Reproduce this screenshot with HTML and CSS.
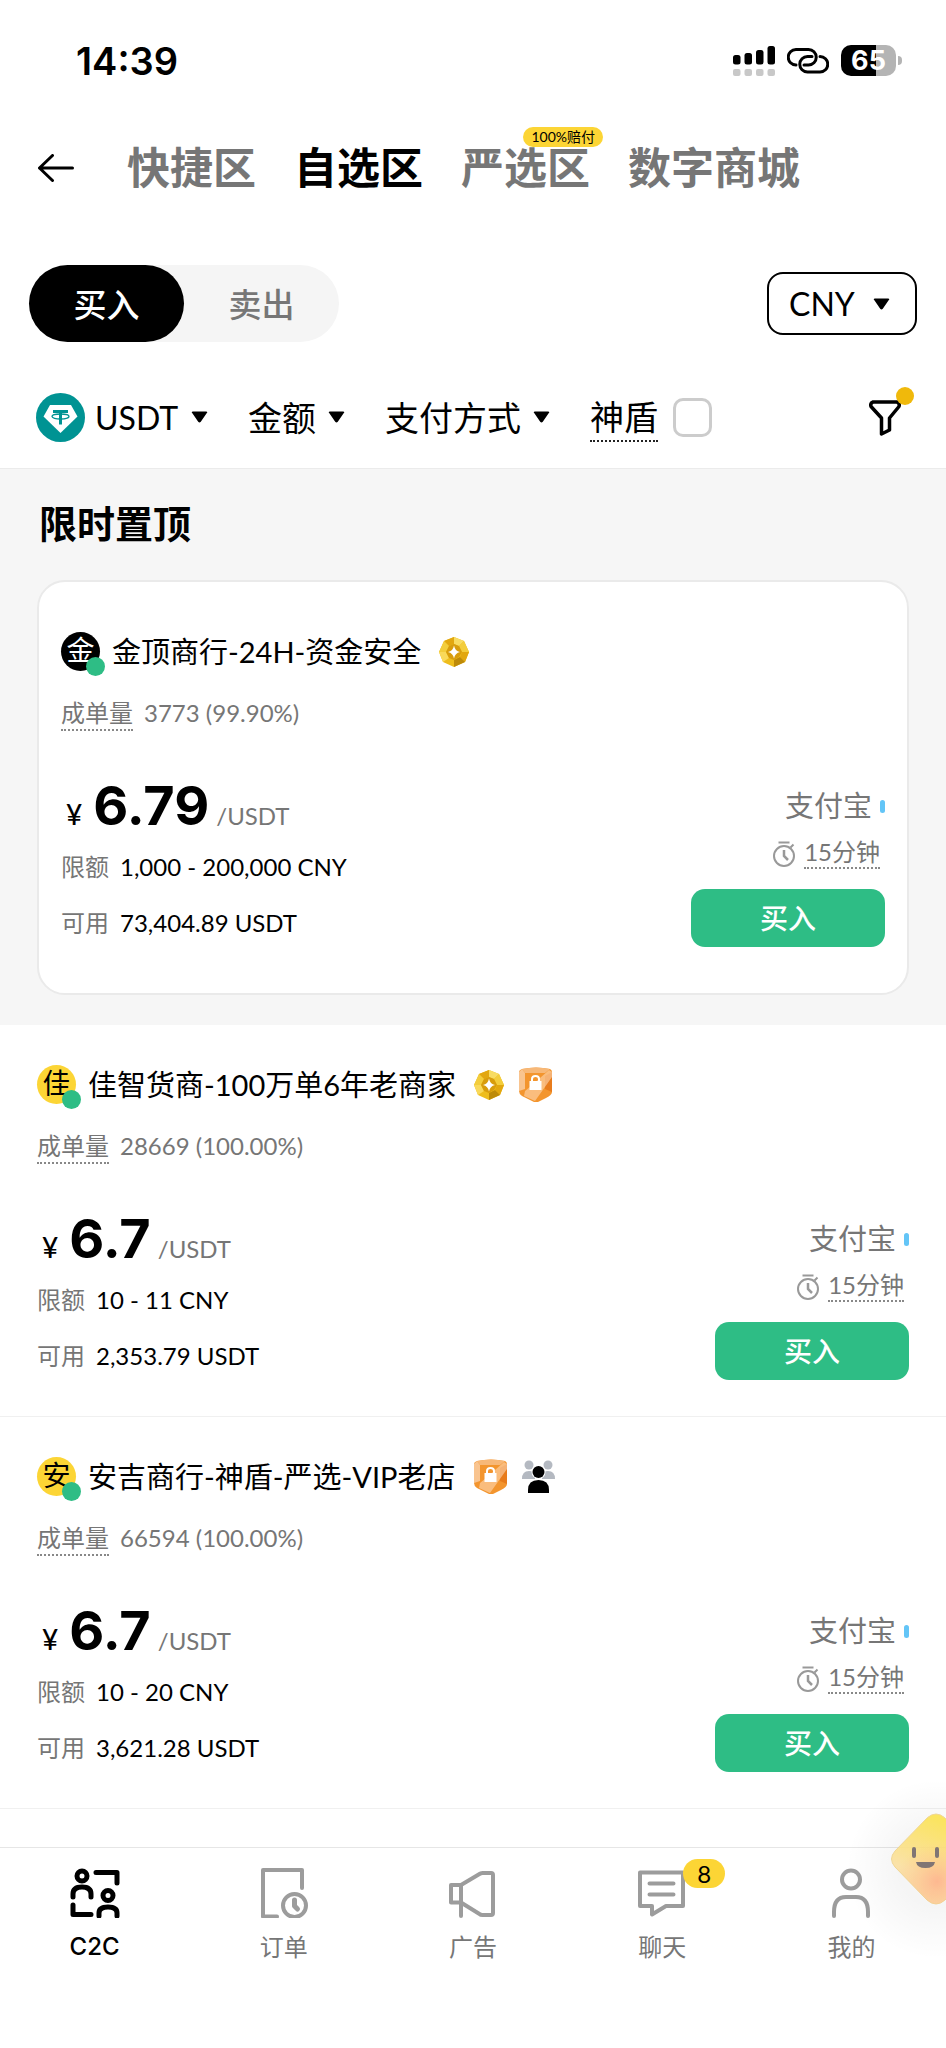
FILE: index.html
```html
<!DOCTYPE html>
<html lang="zh-CN">
<head>
	<meta charset="utf-8">
	<meta name="viewport" content="width=device-width, initial-scale=1">
	<title>C2C</title>
	<link rel="stylesheet" href="styles.css">
</head>
<body>
	<!-- shared icons -->
	<svg class="sprite" aria-hidden="true">
		<symbol id="caret" viewBox="0 0 17 12"><path d="M2 .5h13q2 0 .8 1.600L9.800 10.800q-1.300 1.400-2.600 0L1.200 2.100Q0 .5 2 .5z"/></symbol>
		<symbol id="timer" viewBox="0 0 22 26">
			<g fill="none" stroke="#999" stroke-width="2">
				<circle cx="11" cy="15" r="10"/>
				<path d="M5.500 1.500h11M17.500 6.500l3-3"/>
				<path d="M11 9v6l4 4" stroke-width="2.500"/>
			</g>
		</symbol>
		<symbol id="gold" viewBox="0 0 30 30">
			<path fill="#eebd1c" d="M15 0l10 4 5 11-4 10-11 5-11-5-4-10L5 4z"/>
			<path fill="#f8dc62" d="M15 0l10 4-5 5-5-2z"/>
			<path fill="#e2a70f" d="M15 0L5 4l5 5 5-2zM30 15l-4 10-5-5 2-5z"/>
			<path fill="#f3cd3c" d="M5 4L0 15l7 0 3-6zM25 4l5 11h-7l-3-6z"/>
			<path fill="#f9d95a" d="M4 25l-4-10h7l3 6z"/>
			<path fill="#bd8a09" d="M15 30l11-5-5-5-6 3z"/>
			<path fill="#d89d0c" d="M10 9l5-2 5 2 3 6-3 5-5 3-5-2-3-6z"/>
			<path fill="#fff" d="M15 8.500q1 5.500 6 6.500-5 1-6 6.500-1-5.500-6-6.500 5-1 6-6.500z"/>
		</symbol>
		<symbol id="shield" viewBox="0 0 33 35">
			<path fill="#f3952e" d="M3 2q14-3 28 0 2 1 2 3v20q0 3-6 6l-8 4q-3 1-6-1L3 29q-3-2-3-5V5q0-2 3-3z"/>
			<path fill="#f7b878" d="M3 2q14-3 28 0L26 6H6z"/>
			<path fill="#f9c48f" d="M3 2L0 5v19l6-2V6z"/>
			<path fill="#e87c1c" d="M33 5v20l-7-3V9z"/>
			<path fill="#ffdfc0" d="M6 24l6-5L30 3l3 2v5L16 34 5 29z" opacity=".55"/>
			<path fill="#fff" d="M10.500 14h12v9h-12z"/>
			<path fill="none" stroke="#fff" stroke-width="2" d="M13 14v-2q0-3 3.500-3t3.500 3v2"/>
		</symbol>
		<symbol id="people" viewBox="0 0 33 34">
			<g fill="#b4b9c1">
				<circle cx="7" cy="5" r="4.500"/>
				<circle cx="26" cy="5" r="4.500"/>
				<path d="M0 19q0-8 7-8 5 0 6 4v4zM33 19q0-8-7-8-5 0-6 4v4z"/>
			</g>
			<circle cx="16.500" cy="12" r="7" fill="#fff"/>
			<circle cx="16.500" cy="12" r="6"/>
			<path d="M6 33v-3q0-10 10.500-10T27 30v3z"/>
		</symbol>
	</svg>

	<div class="status">
		<time>14:39</time>
		<div class="status-icons">
			<svg width="42" height="30" viewBox="0 0 42 30">
				<rect y="9" width="7.500" height="9.500" rx="2.500"/>
				<rect x="11.500" y="7" width="7.500" height="11.500" rx="2.500"/>
				<rect x="23" y="4" width="7.500" height="14.500" rx="2.500"/>
				<rect x="34.500" width="7.500" height="18.500" rx="2.500"/>
				<g fill="#c8c8c8">
					<rect y="23" width="7.500" height="7" rx="2"/>
					<rect x="11.500" y="23" width="7.500" height="7" rx="2"/>
					<rect x="23" y="23" width="7.500" height="7" rx="2"/>
					<rect x="34.500" y="23" width="7.500" height="7" rx="2"/>
				</g>
			</svg>
			<svg width="42" height="26" viewBox="0 0 42 26" fill="none" stroke="#000" stroke-width="3" stroke-linecap="round">
				<path d="M9 17A7.750 7.750 0 0 1 9 1.500h12.500a7.750 7.750 0 0 1 0 15.500H17"/>
				<path d="M33 8.500a7.750 7.750 0 0 1 0 15.500H20.500a7.750 7.750 0 0 1 0-15.500H25"/>
			</svg>
			<span class="battery">65</span>
		</div>
	</div>

	<header class="topbar">
		<a href="#back" class="back" aria-label="返回">
			<svg width="36" height="28" viewBox="0 0 36 28" fill="none" stroke="#000" stroke-width="3" stroke-linecap="round" stroke-linejoin="round"><path d="M34.500 14H1.500M14.500 1.500L1.500 14l13 12.500"/></svg>
		</a>
		<nav class="zones">
			<a href="#express">快捷区</a>
			<a href="#p2p" class="active">自选区</a>
			<a href="#strict">严选区<span class="tip">100%赔付</span></a>
			<a href="#mall">数字商城</a>
		</nav>
	</header>

	<div class="trade">
		<div class="toggle">
			<button type="button" class="on">买入</button>
			<button type="button">卖出</button>
		</div>
		<div class="dropdown fiat">
			<select aria-label="法币"><option>CNY</option></select>
			<svg class="caret"><use href="#caret"/></svg>
		</div>
	</div>

	<div class="filters">
		<svg class="coin" viewBox="0 0 49 49">
			<circle cx="24.500" cy="24.500" r="24.500" fill="#009393"/>
			<path fill="#fff" d="M14 12h21l6.500 11.500L24.500 40 7.500 23.500z"/>
			<g fill="none" stroke="#009393">
				<path stroke-width="3" d="M17 18.500h15M24.500 18.500v13"/>
				<ellipse cx="24.500" cy="23.500" rx="8.500" ry="2.500" stroke-width="1.300"/>
			</g>
		</svg>
		<div class="dropdown">
			<select aria-label="币种"><option>USDT</option></select>
			<svg class="caret"><use href="#caret"/></svg>
		</div>
		<div class="dropdown">
			<select aria-label="金额"><option>金额</option></select>
			<svg class="caret"><use href="#caret"/></svg>
		</div>
		<div class="dropdown">
			<select aria-label="支付方式"><option>支付方式</option></select>
			<svg class="caret"><use href="#caret"/></svg>
		</div>
		<label for="guard" class="guard">神盾</label>
		<input type="checkbox" id="guard">
		<button type="button" class="funnel" aria-label="筛选">
			<svg width="32" height="36" viewBox="0 0 32 36" fill="none" stroke="#000" stroke-width="3.500" stroke-linejoin="round"><path d="M4 2h24q3 1 2 4.500L20.500 18v12l-8 4V18L2 6.500Q1 3 4 2z"/></svg>
		</button>
	</div>

	<main>
		<section class="pinned">
			<h2>限时置顶</h2>
			<article class="offer card">
				<div class="merchant">
					<span class="avatar dark">金</span>
					<a href="#m1">金顶商行-24H-资金安全</a>
					<svg class="gold"><use href="#gold"/></svg>
				</div>
				<p class="stats"><span class="hint">成单量</span>3773 (99.90%)</p>
				<div class="deal">
					<div class="info">
						<p class="price"><small>¥</small><b>6.79</b><span>/USDT</span></p>
						<p class="line"><span>限额</span>1,000 - 200,000 CNY</p>
						<p class="line"><span>可用</span>73,404.89 USDT</p>
					</div>
					<div class="side">
						<p class="pay">支付宝</p>
						<p class="time"><svg><use href="#timer"/></svg><span class="hint">15分钟</span></p>
						<button type="button" class="buy">买入</button>
					</div>
				</div>
			</article>
		</section>

		<article class="offer">
			<div class="merchant">
				<span class="avatar">佳</span>
				<a href="#m2">佳智货商-100万单6年老商家</a>
				<svg class="gold"><use href="#gold"/></svg>
				<svg class="shield"><use href="#shield"/></svg>
			</div>
			<p class="stats"><span class="hint">成单量</span>28669 (100.00%)</p>
			<div class="deal">
				<div class="info">
					<p class="price"><small>¥</small><b>6.7</b><span>/USDT</span></p>
					<p class="line"><span>限额</span>10 - 11 CNY</p>
					<p class="line"><span>可用</span>2,353.79 USDT</p>
				</div>
				<div class="side">
					<p class="pay">支付宝</p>
					<p class="time"><svg><use href="#timer"/></svg><span class="hint">15分钟</span></p>
					<button type="button" class="buy">买入</button>
				</div>
			</div>
		</article>

		<article class="offer">
			<div class="merchant">
				<span class="avatar">安</span>
				<a href="#m3">安吉商行-神盾-严选-VIP老店</a>
				<svg class="shield"><use href="#shield"/></svg>
				<svg class="people"><use href="#people"/></svg>
			</div>
			<p class="stats"><span class="hint">成单量</span>66594 (100.00%)</p>
			<div class="deal">
				<div class="info">
					<p class="price"><small>¥</small><b>6.7</b><span>/USDT</span></p>
					<p class="line"><span>限额</span>10 - 20 CNY</p>
					<p class="line"><span>可用</span>3,621.28 USDT</p>
				</div>
				<div class="side">
					<p class="pay">支付宝</p>
					<p class="time"><svg><use href="#timer"/></svg><span class="hint">15分钟</span></p>
					<button type="button" class="buy">买入</button>
				</div>
			</div>
		</article>
	</main>

	<nav class="tabbar">
		<a href="#c2c" class="active">
			<svg viewBox="0 0 50 50">
				<circle cx="12" cy="8" r="5"/>
				<path d="M3 29v-3q0-7 9-7t9 7v3M26 4.500h21V15M3 37v9.500h18"/>
				<circle cx="38" cy="27.500" r="5"/>
				<path d="M29 48v-3q0-6 9-6t9 6v3"/>
			</svg>
			C2C
		</a>
		<a href="#orders">
			<svg viewBox="0 0 50 50">
				<path d="M43 20V2H4v46.500h14"/>
				<circle cx="35.500" cy="37.500" r="11.500"/>
				<path d="M35.500 32v6l3 3" stroke-width="5"/>
			</svg>
			订单
		</a>
		<a href="#ads">
			<svg viewBox="0 0 50 50">
				<path d="M3 17h10v17.500H3zM13 17L31.500 6q1-1 3-1H43q2 0 2 2v38q0 2-2 2h-8.500q-2 0-3-1L13 34.500V48"/>
			</svg>
			广告
		</a>
		<a href="#chat">
			<svg viewBox="0 0 50 50">
				<path d="M3 4.500h43V38H29l-14 8.500V38H3zM12.500 15.500h24M12.500 26.500h24"/>
			</svg>
			聊天
			<span class="count">8</span>
		</a>
		<a href="#me">
			<svg viewBox="0 0 50 50">
				<circle cx="25" cy="11.500" r="9"/>
				<path d="M8 48v-4q0-15 12-15h10q12 0 12 15v4"/>
			</svg>
			我的
		</a>
		<!-- assistant, half off the right edge -->
		<svg class="helper" viewBox="0 0 160 200">
			<defs>
				<radialGradient id="haze"><stop offset=".4" stop-color="#000" stop-opacity=".04"/><stop offset="1" stop-color="#000" stop-opacity="0"/></radialGradient>
				<linearGradient id="face" x1="0" y1="1" x2=".4" y2="0"><stop offset="0" stop-color="#fcd3a0"/><stop offset=".4" stop-color="#fbe0a0"/><stop offset="1" stop-color="#fce34f"/></linearGradient>
				<radialGradient id="glow" cx=".5" cy=".75" r=".45"><stop offset="0" stop-color="#ffa680" stop-opacity=".8"/><stop offset="1" stop-color="#ffc080" stop-opacity="0"/></radialGradient>
			</defs>
			<circle cx="150" cy="110" r="90" fill="url(#haze)"/>
			<g opacity=".9">
				<path fill="url(#face)" stroke="#f0d48c" d="M141 59q9-8 18 0l34 34q7 7 0 14l-34 34q-9 8-18 0l-32-33q-7-8 0-16z"/>
				<path fill="url(#glow)" d="M141 59q9-8 18 0l34 34q7 7 0 14l-34 34q-9 8-18 0l-32-33q-7-8 0-16z"/>
			</g>
			<g fill="#807574">
				<rect x="126" y="88" width="4" height="11" rx="2"/>
				<rect x="149" y="88" width="4" height="11" rx="2"/>
				<path d="M130 103h19q-1 6-9.500 6t-9.500-6z"/>
			</g>
		</svg>
	</nav>
</body>
</html>
```

FILE: styles.css
```css
* { box-sizing: border-box; }

body {
	margin: 0;
	min-height: 100vh;
	display: flex;
	flex-direction: column;
	background: #fff;
	color: #000;
	font: 24px/30px Lato, "Noto Sans CJK SC", sans-serif;
}

p, h2 { margin: 0; }
a { color: inherit; text-decoration: none; }
button, select, input { font: inherit; color: inherit; margin: 0; }
button { border: 0; padding: 0; background: none; }
svg { display: block; flex: none; }
.sprite { width: 0; height: 0; position: absolute; }

/* status bar */
.status {
	height: 121px;
	padding: 0 44px 0 76px;
	display: flex;
	align-items: center;
	justify-content: space-between;
	font-family: Inter, sans-serif;
}
.status time { font-size: 38px; font-weight: 600; }
.status-icons { display: flex; align-items: center; gap: 12px; }
.battery {
	position: relative;
	width: 55px;
	height: 31px;
	margin-right: 6px;
	border-radius: 10px;
	background: linear-gradient(90deg, #000 64%, #b4b4b4 64%);
	color: #fff;
	font-size: 27px;
	font-weight: 700;
	line-height: 31px;
	text-align: center;
}
.battery::after {
	content: "";
	position: absolute;
	left: 57px;
	top: 11px;
	width: 4px;
	height: 9px;
	border-radius: 0 4px 4px 0;
	background: #b4b4b4;
}

/* zones */
.topbar {
	height: 94px;
	padding: 0 38px;
	display: flex;
	align-items: center;
	gap: 53px;
}
.zones {
	display: flex;
	gap: 38px;
	color: #767676;
	font-size: 43px;
	font-weight: 700;
	line-height: 60px;
	white-space: nowrap;
}
.zones a { position: relative; }
.zones .active { color: #000; }
.tip {
	position: absolute;
	right: -13px;
	top: -11px;
	padding: 0 8px;
	border-radius: 10px;
	background: #fcd535;
	color: #000;
	font-size: 14px;
	font-weight: 400;
	line-height: 20px;
}

/* buy / sell */
.trade {
	margin: 50px 29px 0;
	display: flex;
	align-items: center;
	justify-content: space-between;
}
.toggle {
	display: flex;
	border-radius: 39px;
	background: #f5f5f5;
	font-size: 33px;
	font-weight: 500;
}
.toggle button {
	width: 155px;
	height: 77px;
	border-radius: 39px;
	color: #767676;
}
.toggle .on { background: #000; color: #fff; }

.dropdown { position: relative; }
.dropdown select {
	display: block;
	appearance: none;
	border: 0;
	padding: 0 29px 0 0;
	background: none;
	font-size: 34px;
	line-height: 49px;
}
.caret {
	position: absolute;
	right: 0;
	top: 18px;
	width: 17px;
	height: 12px;
	pointer-events: none;
}
.fiat select {
	width: 150px;
	height: 63px;
	padding: 0 20px;
	border: 2px solid #000;
	border-radius: 16px;
	font-size: 32px;
}
.fiat .caret { right: 27px; top: 26px; }

/* filters */
.filters {
	padding: 51px 45px 26px 36px;
	display: flex;
	align-items: center;
	border-bottom: 1px solid #ebebeb;
	font-size: 34px;
	line-height: 49px;
}
.filters .dropdown { margin-right: 40px; }
.coin { width: 49px; height: 49px; margin-right: 10px; }
.coin + .dropdown select { font-size: 32px; }
.guard {
	margin-right: 15px;
	line-height: 46px;
	border-bottom: 2px dotted #222;
}
.filters input {
	appearance: none;
	width: 39px;
	height: 39px;
	border: 3px solid #ccc;
	border-radius: 10px;
}
.filters input:checked { background: #000; border-color: #000; }
.funnel { position: relative; margin-left: auto; }
.funnel::after {
	content: "";
	position: absolute;
	right: -13px;
	top: -13px;
	width: 18px;
	height: 18px;
	border-radius: 50%;
	background: #f0b90b;
}

/* offers */
main { flex: 1; }
.pinned {
	padding: 29px 37px 30px;
	background: #f6f6f6;
}
.pinned h2 {
	margin: 0 2px 32px;
	font-size: 38px;
	font-weight: 700;
	line-height: 50px;
}
.offer {
	padding: 40px 37px 36px;
	border-bottom: 1px solid #f0f0f0;
}
.card {
	padding: 50px 22px 46px;
	border: 2px solid #eaeaea;
	border-radius: 28px;
	background: #fff;
}
.merchant {
	height: 39px;
	display: flex;
	align-items: center;
	font-size: 29px;
}
.merchant a { margin: 0 3px 0 12px; }
.merchant svg { margin-left: 15px; }
.avatar {
	position: relative;
	width: 39px;
	height: 39px;
	border-radius: 50%;
	background: #fcd535;
	font-size: 28px;
	line-height: 37px;
	text-align: center;
}
.avatar.dark { background: #000; color: #fff; }
.avatar::after {
	content: "";
	position: absolute;
	right: -5px;
	bottom: -5px;
	width: 19px;
	height: 19px;
	border-radius: 50%;
	background: #2ebd85;
}
.gold { width: 30px; height: 30px; }
.shield { width: 33px; height: 35px; }
.people { width: 33px; height: 34px; }

.hint {
	padding-bottom: 2px;
	border-bottom: 2px dotted #888;
}
.stats { margin-top: 27px; color: #767676; }
.stats .hint { margin-right: 11px; }

.deal {
	margin-top: 48px;
	display: flex;
	justify-content: space-between;
}
.price {
	height: 56px;
	padding: 2px 0 0 5px;
	display: flex;
	align-items: baseline;
	line-height: 56px;
}
.price small { font-size: 28px; font-weight: 500; }
.price b {
	margin: 0 7px 0 11px;
	font-family: Inter, sans-serif;
	font-size: 54px;
}
.price span { color: #767676; }
.line { margin-top: 20px; }
.line + .line { margin-top: 26px; }
.line span { margin-right: 11px; color: #767676; }

.side {
	padding-top: 10px;
	display: flex;
	flex-direction: column;
	align-items: flex-end;
	color: #767676;
}
.pay {
	display: flex;
	align-items: center;
	gap: 8px;
	font-size: 29px;
	line-height: 40px;
}
.pay::after {
	content: "";
	width: 5px;
	height: 13px;
	border-radius: 3px;
	background: #63c5f7;
}
.time {
	margin: 13px 5px 20px 0;
	display: flex;
	align-items: center;
	gap: 9px;
}
.time svg { width: 22px; height: 26px; }
.time .hint { line-height: 26px; }
.buy {
	width: 194px;
	height: 58px;
	border-radius: 14px;
	background: #2ebd85;
	color: #fff;
	font-size: 28px;
	font-weight: 500;
}

/* bottom tabs */
.tabbar {
	position: relative;
	height: 201px;
	padding-top: 20px;
	display: flex;
	border-top: 1px solid #e6e6e6;
	color: #767676;
}
.tabbar a {
	position: relative;
	flex: 1;
	display: flex;
	flex-direction: column;
	align-items: center;
	gap: 14px;
}
.tabbar a svg {
	width: 50px;
	height: 50px;
	fill: none;
	stroke: #9c9c9c;
	stroke-width: 4;
	stroke-linecap: round;
	stroke-linejoin: round;
}
.tabbar .active { color: #000; font-family: Inter, sans-serif; font-weight: 500; }
.count {
	position: absolute;
	left: calc(50% + 21px);
	top: -9px;
	width: 42px;
	border-radius: 15px;
	background: #fcd535;
	color: #000;
	line-height: 29px;
	text-align: center;
}
.tabbar a.active svg { stroke: #000; stroke-width: 5; }
.helper {
	position: absolute;
	right: 0;
	top: -89px;
	width: 160px;
	height: 200px;
	pointer-events: none;
}
```
